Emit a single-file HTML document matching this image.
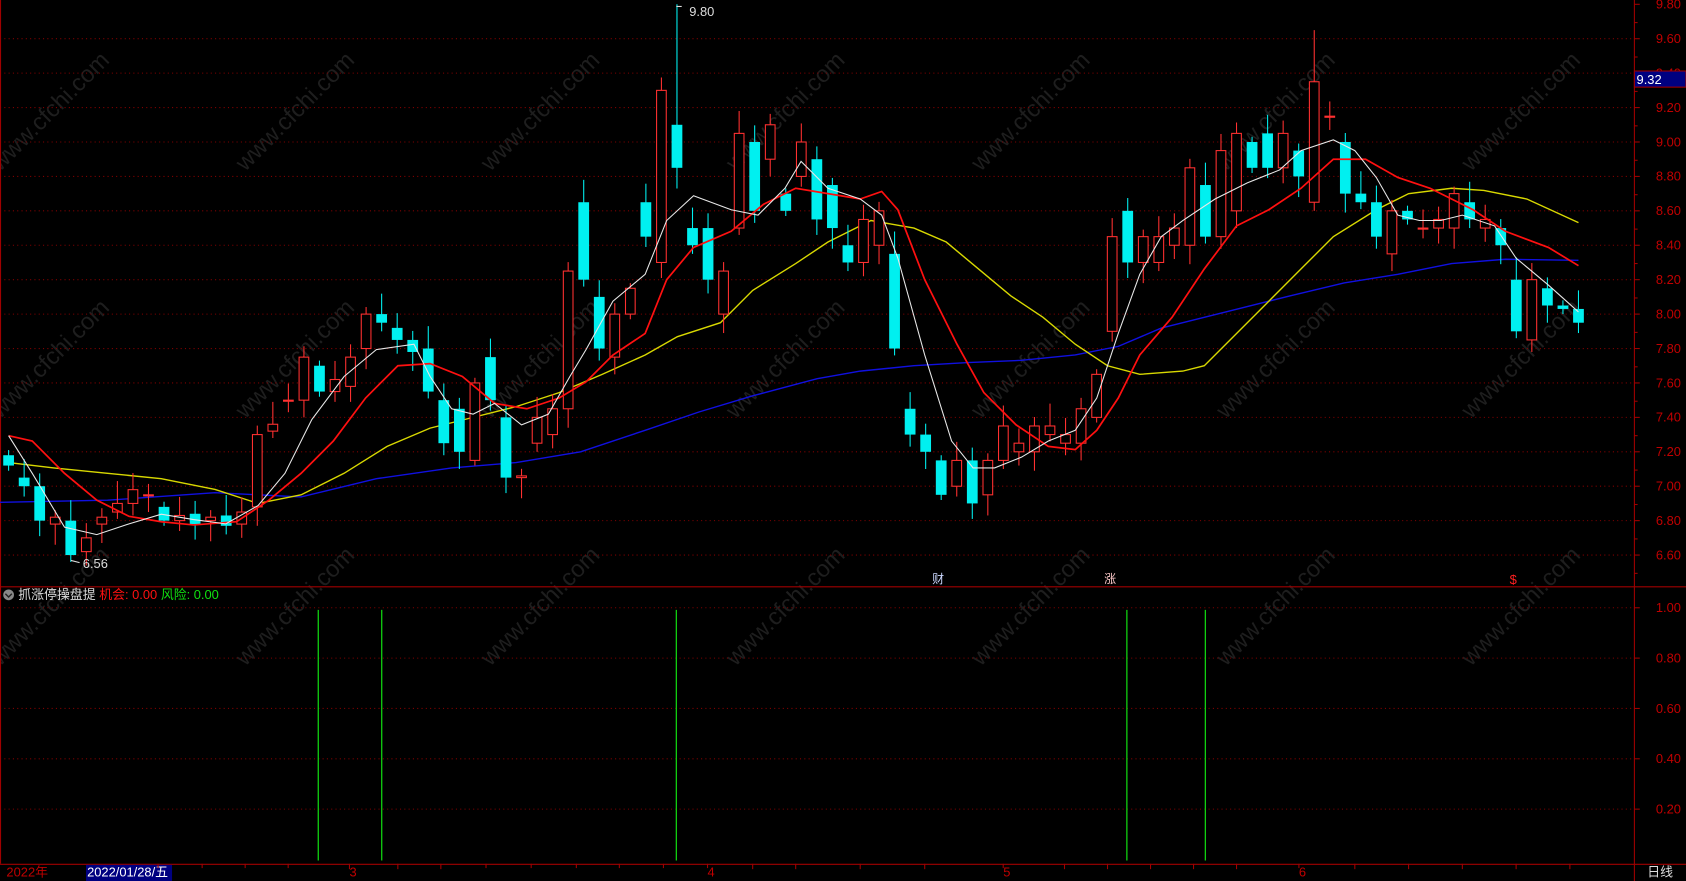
<!DOCTYPE html>
<html><head><meta charset="utf-8">
<style>
html,body{margin:0;padding:0;background:#000;overflow:hidden}
svg{display:block}
text{font-family:"Liberation Sans","Noto Sans CJK SC",sans-serif}
</style></head>
<body>
<svg id="s" width="1686" height="881" viewBox="0 0 1568 819" preserveAspectRatio="none" xmlns="http://www.w3.org/2000/svg">
<rect width="1568" height="819" fill="#000"/>
<g id="wm" fill="#1e1e1e" font-size="22"></g>
<g id="grid"></g>
<line x1="1520" y1="0" x2="1520" y2="819" stroke="#a00000" stroke-width="1"/>
<line x1="0" y1="545.5" x2="1568" y2="545.5" stroke="#a00000"/>
<line x1="0" y1="803.5" x2="1568" y2="803.5" stroke="#a00000"/>
<line x1="0.5" y1="0" x2="0.5" y2="803" stroke="#a00000"/>
<g id="axis" fill="#c00000" font-size="12"></g>
<g id="lines" fill="none" stroke-width="1.3">
<polyline stroke="#1010e0" points="0,467 100,465 200,458 280,462 350,445 420,435 480,430 540,420 600,400 650,383 700,368 760,352 800,345 850,340 900,337 950,335 1000,330 1040,322 1080,305 1120,295 1160,285 1200,275 1250,263 1300,255 1350,245 1400,241 1468,242"/>
<polyline stroke="#d8d800" points="8,430 50,435 100,440 150,445 200,455 240,468 280,460 320,440 360,415 400,398 440,388 480,378 520,365 560,348 600,330 630,313 670,300 700,270 740,245 770,225 810,205 850,212 880,225 910,250 940,275 970,295 1000,320 1030,340 1060,348 1100,345 1120,340 1150,310 1180,280 1210,250 1240,220 1280,195 1310,180 1350,175 1380,177 1420,185 1468,207"/>
</g>
<g id="candles"></g>
<g fill="none" stroke-width="1.6">
<polyline stroke="#ff1010" points="8,405 30,410 60,440 90,465 120,480 150,485 180,488 220,485 250,465 280,440 310,410 340,370 370,340 400,338 430,350 460,375 490,380 520,370 545,355 570,330 600,310 620,260 645,230 680,215 710,190 740,175 770,180 800,185 820,178 835,195 860,260 890,320 915,365 945,395 975,415 1000,418 1020,400 1040,370 1060,330 1090,295 1120,250 1150,210 1180,195 1210,175 1240,148 1270,148 1300,165 1330,175 1370,195 1400,215 1440,230 1468,247"/>
<polyline stroke="#e8e8e8" stroke-width="1" points="8,405 30,440 60,490 90,497 120,487 150,478 180,483 210,487 240,470 265,440 290,390 320,350 350,325 385,320 400,350 420,380 440,385 460,375 485,395 510,385 530,350 545,325 570,280 600,255 620,205 645,182 680,195 705,200 730,175 745,150 770,175 800,185 820,200 835,240 860,330 885,410 905,435 925,435 950,425 975,410 1000,400 1020,370 1040,310 1060,255 1080,220 1100,205 1130,185 1160,170 1190,158 1210,140 1240,130 1260,140 1280,165 1300,200 1320,205 1340,205 1360,200 1390,210 1410,240 1440,265 1468,290"/>
</g>
<polyline points="629,6 634,6" stroke="#ddd" fill="none"/><text x="641" y="15" fill="#ddd" font-size="12">9.80</text>
<line x1="66" y1="521" x2="74" y2="523" stroke="#ddd"/><text x="77" y="528" fill="#ddd" font-size="12">6.56</text>
<text x="867" y="542" fill="#ccd8ff" font-size="11">财</text>
<text x="1027" y="542" fill="#ffcccc" font-size="11">涨</text>
<text x="1404" y="543" fill="#ff2020" font-size="12">$</text>
<rect x="1520" y="66" width="48" height="15" fill="#000080" stroke="#a00000"/>
<text x="1522" y="78" fill="#fff" font-size="12">9.32</text>
<circle cx="8" cy="553" r="5" fill="#888"/><path d="M5,552 L8,555 L11,552" stroke="#222" fill="none" stroke-width="1.3"/>
<text x="17" y="557" font-size="12" fill="#ddd">抓涨停操盘提 <tspan fill="#ff1010">机会: 0.00</tspan> <tspan fill="#10e010">风险: 0.00</tspan></text>
<g stroke="#10d010" stroke-width="1.2">
<line x1="296" y1="567" x2="296" y2="800"/><line x1="355" y1="567" x2="355" y2="800"/>
<line x1="629" y1="567" x2="629" y2="800"/><line x1="1048" y1="567" x2="1048" y2="800"/>
<line x1="1121" y1="567" x2="1121" y2="800"/>
</g>
<text x="6" y="815" fill="#c00000" font-size="12">2022年</text>
<rect x="80" y="804" width="80" height="15" fill="#000080"/>
<text x="81" y="815" fill="#fff" font-size="12">2022/01/28/五</text>
<g fill="#c00000" font-size="12"><text x="325" y="815">3</text><text x="658" y="815">4</text><text x="933" y="815">5</text><text x="1208" y="815">6</text></g>
<g stroke="#a00000" id="bt"></g>
<text x="1532" y="815" fill="#ddd" font-size="12">日线</text>
</svg>
<script>
var NS="http://www.w3.org/2000/svg";
function el(p,t,a,txt){var e=document.createElementNS(NS,t);for(var k in a)e.setAttribute(k,a[k]);if(txt!=null)e.textContent=txt;p.appendChild(e);return e;}
function Y(p){return 4+(9.8-p)*160;}
var grid=document.getElementById('grid'),axis=document.getElementById('axis');
for(var p=9.8;p>=6.59;p-=0.2){var y=Y(p);if(p<9.79)el(grid,'line',{x1:0,y1:y,x2:1520,y2:y,stroke:'#800000','stroke-dasharray':'1,3'});
el(axis,'text',{x:1540,y:y+4},p.toFixed(2));el(axis,'line',{x1:1520,y1:y,x2:1525,y2:y,stroke:'#a00000'});el(axis,'line',{x1:1520,y1:y+17,x2:1523,y2:y+17,stroke:'#a00000'});}
for(var v=1;v>=0.19;v-=0.2){var y=565+(1-v)/0.2*46.8;el(grid,'line',{x1:0,y1:y,x2:1520,y2:y,stroke:'#800000','stroke-dasharray':'1,3'});el(axis,'text',{x:1540,y:y+4},v.toFixed(2));el(axis,'line',{x1:1520,y1:y,x2:1525,y2:y,stroke:'#a00000'});}
var bt=document.getElementById('bt');[147,188,228,268,325,370,410,452,494,536,576,617,658,700,740,800,860,933,990,1030,1070,1110,1150,1208,1260,1310,1360,1410,1460].forEach(function(x){el(bt,'line',{x1:x,y1:803,x2:x,y2:x%5==0?808:807});});
var wm=document.getElementById('wm');
for(var r=0;r<3;r++)for(var c=0;c<7;c++){var x=c*228+0,y=r*230+160;el(wm,'text',{x:x,y:y,transform:'rotate(-45 '+x+' '+y+')'},'www.cfchi.com');}
var d=[[7.18,7.12],[7.05,7.0],[7.0,6.8],[6.78,6.82],[6.8,6.6],[6.62,6.7],[6.78,6.82],[6.85,6.9],[6.9,6.98],[6.95,6.95],[6.88,6.8],[6.8,6.83],[6.84,6.78],[6.8,6.82],[6.83,6.77],[6.78,6.85],[6.88,7.3],[7.32,7.36],[7.5,7.5],[7.5,7.75],[7.7,7.55],[7.55,7.62],[7.58,7.75],[7.8,8.0],[8.0,7.95],[7.92,7.85],[7.85,7.78],[7.8,7.55],[7.5,7.25],[7.45,7.2],[7.15,7.6],[7.75,7.5],[7.4,7.05],[7.05,7.06],[7.25,7.4],[7.3,7.45],[7.45,8.25],[8.65,8.2],[8.1,7.8],[7.75,8.0],[8.0,8.15],[8.65,8.45],[8.3,9.3],[9.1,8.85],[8.5,8.4],[8.5,8.2],[8.0,8.25],[8.5,9.05],[9.0,8.6],[8.9,9.1],[8.7,8.6],[8.8,9.0],[8.9,8.55],[8.75,8.5],[8.4,8.3],[8.3,8.55],[8.4,8.6],[8.35,7.8],[7.45,7.3],[7.3,7.2],[7.15,6.95],[7.0,7.15],[7.15,6.9],[6.95,7.15],[7.15,7.35],[7.2,7.25],[7.2,7.35],[7.3,7.35],[7.25,7.3],[7.25,7.45],[7.4,7.65],[7.9,8.45],[8.6,8.3],[8.3,8.45],[8.3,8.45],[8.4,8.5],[8.4,8.85],[8.75,8.45],[8.45,8.95],[8.6,9.05],[9.0,8.85],[9.05,8.85],[8.85,9.05],[8.95,8.8],[8.65,9.35],[9.15,9.15],[9.0,8.7],[8.7,8.65],[8.65,8.45],[8.35,8.6],[8.6,8.55],[8.5,8.5],[8.5,8.55],[8.5,8.7],[8.65,8.55],[8.5,8.55],[8.5,8.4],[8.2,7.9],[7.85,8.2],[8.15,8.05],[8.05,8.03],[8.03,7.95]];
var cg=document.getElementById('candles');
var sp=(1468-8)/(d.length-1);
d.forEach(function(c,i){var x=8+sp*i,o=c[0],cl=c[1];var hi=Math.max(o,cl)+0.03+((i*37)%10)/90,lo=Math.min(o,cl)-0.03-((i*53)%10)/100;
if(i==43)hi=9.8;if(i==4)lo=6.56;if(i==84)hi=9.65;
var up=cl>=o,col=up?'#ff3030':'#00f0f0';
el(cg,'line',{x1:x,y1:Y(hi),x2:x,y2:Y(lo),stroke:col});
var t=Y(Math.max(o,cl)),b=Y(Math.min(o,cl));var h=Math.max(1,b-t);
if(up)el(cg,'rect',{x:x-4.5,y:t,width:9,height:h,fill:'#000',stroke:col});else el(cg,'rect',{x:x-5,y:t,width:10,height:h,fill:col});});
</script>
</body></html>
